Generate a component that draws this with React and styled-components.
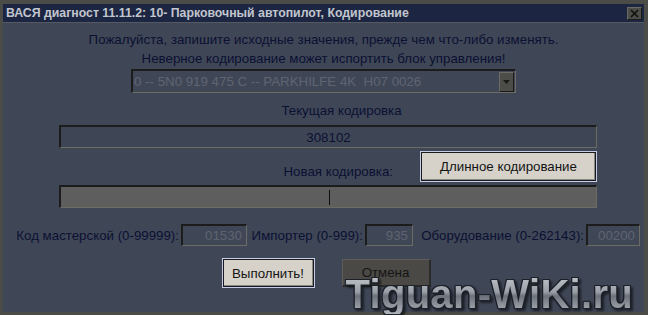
import React from "react";
import styled, { createGlobalStyle } from "styled-components";

const GlobalStyle = createGlobalStyle`
  html, body {
    margin: 0;
    padding: 0;
    background: #3f4757;
  }
  * {
    box-sizing: border-box;
  }
`;

const Frame = styled.div`
  position: relative;
  width: 648px;
  height: 315px;
  display: flex;
  flex-direction: column;
  padding: 4px 4px 3px 3px;
  background: #4b4b47;
  font-family: "Liberation Sans", Arial, sans-serif;
  overflow: hidden;
`;

const TitleBar = styled.div`
  height: 18px;
  display: flex;
  align-items: center;
  justify-content: space-between;
  padding: 0 2px 0 3px;
  background: #1c2541;
  color: #c2c6ce;
  font-weight: bold;
  font-size: 12.3px;
`;

const CloseBtn = styled.div`
  width: 15px;
  height: 13px;
  display: flex;
  align-items: center;
  justify-content: center;
  background: #4c4c48;
  border-top: 1px solid #6a6a64;
  border-left: 1px solid #6a6a64;
  border-bottom: 1px solid #1a1a1a;
  border-right: 1px solid #1a1a1a;
`;

const Body = styled.div`
  flex: 1;
  display: flex;
  flex-direction: column;
  align-items: center;
  padding-top: 7px;
  background: #3f4757;
  border-top: 1px solid #555a62;
  color: #0c1032;
  font-size: 13.3px;
`;

const Line = styled.div`
  line-height: 19px;
  text-align: center;
  margin-top: ${(p) => p.$mt || 0}px;
  padding-left: ${(p) => p.$shift || 0}px;
`;

const Sunken = styled.div`
  border-top: 2px solid #1c1c1c;
  border-left: 2px solid #1c1c1c;
  border-bottom: 1px solid #6c6c64;
  border-right: 1px solid #6c6c64;
`;

const Select = styled(Sunken)`
  width: 385px;
  height: 24px;
  margin-top: 1px;
  display: flex;
  align-items: center;
  justify-content: space-between;
  padding: 0 1px 0 1px;
  color: #5f6570;
  white-space: pre;
`;

const SelectArrow = styled.div`
  width: 15px;
  height: 20px;
  display: flex;
  align-items: center;
  justify-content: center;
  background: #4c4c48;
  border-top: 1px solid #6c6c66;
  border-left: 1px solid #6c6c66;
  border-bottom: 1px solid #1a1a1a;
  border-right: 1px solid #1a1a1a;
`;

const Field = styled(Sunken)`
  align-self: flex-start;
  width: 538px;
  height: ${(p) => p.$h}px;
  margin-left: 56px;
  margin-top: ${(p) => p.$mt}px;
  display: flex;
  align-items: center;
  justify-content: center;
  background: ${(p) => p.$bg};
`;

const Caret = styled.div`
  width: 1px;
  height: 15px;
  background: #0e0e0e;
  margin-left: 2px;
`;

const NewRow = styled.div`
  align-self: flex-start;
  width: 538px;
  margin-left: 56px;
  margin-top: 3px;
  display: flex;
  justify-content: flex-end;
  align-items: flex-end;
`;

const NewLabel = styled.div`
  line-height: 19px;
  margin-right: 27px;
  margin-bottom: 1px;
`;

const LightButton = styled.div`
  width: ${(p) => p.$w}px;
  height: ${(p) => p.$h}px;
  margin-right: ${(p) => p.$mr || 0}px;
  display: flex;
  align-items: center;
  justify-content: center;
  background: #d6d2ca;
  color: #141414;
  font-size: 13.3px;
  border: 1px solid #c6cde6;
  box-shadow: inset 0 0 0 1px #1a1a1e, inset -2px -2px 0 #8a8882;
`;

const DarkButton = styled.div`
  width: 89px;
  height: 28px;
  margin-top: 1px;
  display: flex;
  align-items: center;
  justify-content: center;
  background: #4b4945;
  color: #151515;
  font-size: 13.3px;
  border-top: 1px solid #5e5c58;
  border-left: 1px solid #5e5c58;
  border-bottom: 2px solid #2a2a28;
  border-right: 2px solid #2a2a28;
`;

const ParamRow = styled.div`
  align-self: flex-start;
  margin-left: 14px;
  margin-top: 16px;
  display: flex;
  align-items: center;
`;

const ParamLabel = styled.div`
  width: ${(p) => p.$w}px;
  margin-right: 2px;
  margin-left: ${(p) => p.$ml || 0}px;
  display: flex;
  justify-content: flex-end;
  white-space: nowrap;
`;

const ParamInput = styled(Sunken)`
  width: ${(p) => p.$w}px;
  height: 22px;
  display: flex;
  align-items: center;
  justify-content: flex-end;
  padding-right: 4px;
  color: #5e646f;
`;

const ButtonRow = styled.div`
  margin-top: 12px;
  display: flex;
  align-items: flex-start;
  padding-left: 5px;
`;

const Watermark = styled.div`
  position: absolute;
  right: 15px;
  bottom: 1px;
  font-family: "Liberation Sans", Arial, sans-serif;
  font-weight: bold;
  font-size: 40px;
  line-height: 40px;
  letter-spacing: 0.3px;
  background: linear-gradient(180deg, #c4c8ce 0%, #9aa0a8 45%, #6c727b 55%, #b0b5bc 100%);
  -webkit-background-clip: text;
  background-clip: text;
  -webkit-text-fill-color: transparent;
  filter: drop-shadow(1px 0 0 #1c2028) drop-shadow(-1px 0 0 #1c2028) drop-shadow(0 1px 0 #1c2028)
    drop-shadow(0 -1px 0 #1c2028) drop-shadow(2px 2px 1px rgba(0, 0, 0, 0.55));
  pointer-events: none;
`;

export default function App() {
  return (
    <>
      <GlobalStyle />
      <Frame>
        <TitleBar>
          <span>ВАСЯ диагност 11.11.2: 10- Парковочный автопилот, Кодирование</span>
          <CloseBtn>
            <svg width="9" height="9" viewBox="0 0 9 9">
              <path d="M1 1 L8 8 M8 1 L1 8" stroke="#0f0f0f" strokeWidth="1.6" />
            </svg>
          </CloseBtn>
        </TitleBar>
        <Body>
          <Line>Пожалуйста, запишите исходные значения, прежде чем что-либо изменять.</Line>
          <Line>Неверное кодирование может испортить блок управления!</Line>
          <Select>
            <span>0 -- 5N0 919 475 C -- PARKHILFE 4K  H07 0026</span>
            <SelectArrow>
              <svg width="7" height="4" viewBox="0 0 7 4">
                <path d="M0 0 L7 0 L3.5 4 Z" fill="#1a1a1a" />
              </svg>
            </SelectArrow>
          </Select>
          <Line $mt={8} $shift={36}>Текущая кодировка</Line>
          <Field $h={23} $mt={5} $bg="#3e4656">308102</Field>
          <NewRow>
            <NewLabel>Новая кодировка:</NewLabel>
            <LightButton $w={177} $h={31}>Длинное кодирование</LightButton>
          </NewRow>
          <Field $h={23} $mt={3} $bg="#5e5e5e">
            <Caret />
          </Field>
          <ParamRow>
            <ParamLabel $w={162}>Код мастерской (0-99999):</ParamLabel>
            <ParamInput $w={66}>01530</ParamInput>
            <ParamLabel $w={112} $ml={4}>Импортер (0-999):</ParamLabel>
            <ParamInput $w={48}>935</ParamInput>
            <ParamLabel $w={163} $ml={8}>Оборудование (0-262143):</ParamLabel>
            <ParamInput $w={54}>00200</ParamInput>
          </ParamRow>
          <ButtonRow>
            <LightButton $w={93} $h={30} $mr={27}>Выполнить!</LightButton>
            <DarkButton>Отмена</DarkButton>
          </ButtonRow>
        </Body>
        <Watermark>Tiguan-WiKi.ru</Watermark>
      </Frame>
    </>
  );
}
